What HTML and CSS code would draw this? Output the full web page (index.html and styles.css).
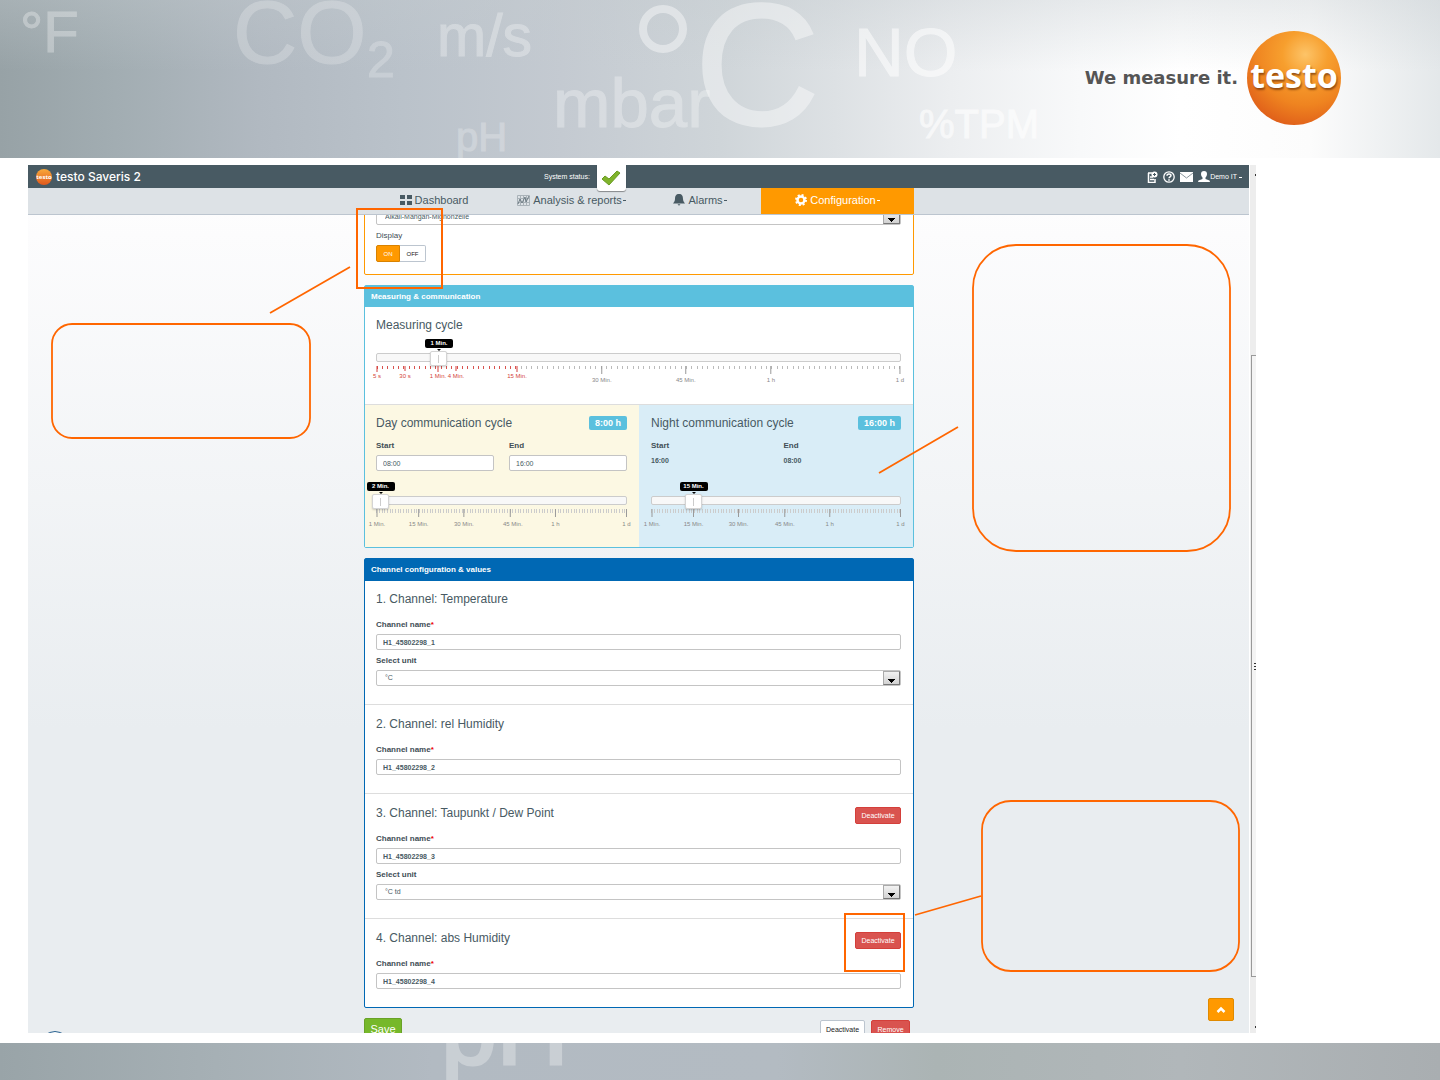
FILE: index.html
```html
<!DOCTYPE html>
<html lang="en">
<head>
<meta charset="utf-8">
<title>testo Saveris 2 - Configuration</title>
<link rel="stylesheet" href="styles.css">
</head>
<body>
<header class="banner">
  <svg class="units" aria-hidden="true">
    <g opacity=".3"><text x="20" y="52" font-size="58">°F</text></g>
    <g opacity=".22"><text x="233" y="63" font-size="89">CO</text><text x="367" y="77" font-size="50">2</text></g>
    <g opacity=".3"><text x="437" y="56" font-size="59">m/s</text><text x="553" y="127" font-size="69">mbar</text></g>
    <g opacity=".24"><text x="456" y="151" font-size="40">pH</text></g>
    <g opacity=".42"><circle cx="663" cy="29" r="20" fill="none" stroke-width="8"/><text class="large" x="695" y="124" font-size="172">C</text></g>
    <g opacity=".55"><text x="854" y="76" font-size="69">NO</text></g>
    <g opacity=".6"><text x="919" y="138" font-size="40">%TPM</text></g>
  </svg>
  <p class="claim">We measure it.</p>
  <div class="brand">testo</div>
</header>

<main class="stage">
  <div class="app">
    <div class="view">
      <div class="topbar">
        <div class="product"><span class="ball">testo</span>testo Saveris 2</div>
        <div class="status"><span>System status:</span>
          <span class="status-box"><svg width="20" height="18" viewBox="0 0 20 18"><path d="M1 10l3-3 4 3 8-8 3 2L8 16z" fill="#7fb32b" stroke="#6a9c22"/></svg></span>
        </div>
        <div class="tools">
          <svg width="11" height="12" viewBox="0 0 11 12"><path d="M1 2h4M1.500 2v9.500h6.500V8M3 6h3M3 8.500h4" fill="none" stroke="#fff" stroke-width="1.500"/><circle cx="7.500" cy="3.500" r="3" fill="#fff"/><path d="M7.500 2v3M6 3.500h3" stroke="#485a63"/></svg>
          <svg width="12" height="12" viewBox="0 0 12 12"><circle cx="6" cy="6" r="5.200" fill="none" stroke="#fff" stroke-width="1.300"/><path d="M4 4.800C4 2.500 8 2.500 8 4.600 8 6 6 5.900 6 7.300M6 8.200v1.500" fill="none" stroke="#fff" stroke-width="1.500"/></svg>
          <svg width="13" height="10" viewBox="0 0 13 10"><path d="M0 0h13v10H0z" fill="#fff"/><path d="M0 1l6.500 5L13 1" fill="none" stroke="#8b979d"/></svg>
          <a class="user" href="#"><svg width="12" height="11" viewBox="0 0 12 11"><path d="M6 0c2 0 3 1.300 3 3S8 6 7.500 6.500V8l4 1.500L12 11H0l.5-1.500 4-1.500V6.500C4 6 3 4.700 3 3s1-3 3-3z" fill="#fff"/></svg>Demo IT <i class="caret"></i></a>
        </div>
      </div>
      <nav class="nav">
        <div class="nav-items">
          <a href="#"><svg width="12" height="12" viewBox="0 0 12 12"><path d="M0 1h5v4H0zM7 1h5v4H7zM0 7h5v4H0zM7 7h5v4H7z" fill="#485a63"/></svg>Dashboard</a>
          <a href="#"><svg width="13" height="11" viewBox="0 0 13 11"><path d="M.5 .5h12v10H.5zM3.500 0v11M6.500 0v11M9.500 0v11M0 3.500h13M0 7.500h13" fill="none" stroke="#a9b2b8"/><path d="M1 9l2-5 2 4 3-6 1 5 3-6" fill="none" stroke="#6d7b83"/></svg>Analysis &amp; reports<i class="caret"></i></a>
          <a href="#"><svg width="12" height="12" viewBox="0 0 12 12"><path d="M6 0c3 0 4 2 4 5 0 2 1 3 2 4.500H0C1 8 2 7 2 5c0-3 1-5 4-5zM4.500 10.200h3L6 11.800z" fill="#485a63"/></svg>Alarms<i class="caret"></i></a>
          <a href="#" class="active"><svg width="12" height="12" viewBox="0 0 12 12"><circle cx="6" cy="6" r="3.500" fill="none" stroke="#fff" stroke-width="2.500"/><circle cx="6" cy="6" r="5" fill="none" stroke="#fff" stroke-width="2" stroke-dasharray="2 1.927"/></svg>Configuration<i class="caret"></i></a>
        </div>
      </nav>

      <form class="content">
        <section class="panel orange">
          <div class="select"><select aria-label="Battery type"><option>Alkali-Mangan-Mignonzelle</option></select></div>
          <span class="label light">Display</span>
          <div class="toggle"><button type="button" class="on">ON</button><button type="button">OFF</button></div>
        </section>

        <section class="panel cyan">
          <h2>Measuring &amp; communication</h2>
          <div class="block first measuring">
            <h3>Measuring cycle</h3>
            <div class="slider">
              <output style="left:12%">1 Min.</output>
              <div class="track"><input type="range" aria-label="Measuring cycle" min="0" max="1000" value="118"></div>
              <svg class="scale">
                <g class="red"><path d="M1 0v6M29 0v5M62 0v6M80 0v5M141 0v6"/><text x="1" y="12">5 s</text><text x="29" y="12">30 s</text><text x="62" y="12">1 Min.</text><text x="80" y="12">4 Min.</text><text x="141" y="12">15 Min.</text></g>
                <line x1="43%" x2="43%" y2="8"/><line x1="59%" x2="59%" y2="8"/><line x1="75.200%" x2="75.200%" y2="8"/><line x1="99.800%" x2="99.800%" y2="8"/>
                <text x="43%" y="16">30 Min.</text><text x="59%" y="16">45 Min.</text><text x="75.200%" y="16">1 h</text><text x="99.800%" y="16">1 d</text>
              </svg>
            </div>
          </div>
          <div class="cycles">
            <div class="block day">
              <div class="title"><h3>Day communication cycle</h3><span class="badge">8:00 h</span></div>
              <div class="times">
                <label><span class="label">Start</span><input type="text" value="08:00"></label>
                <label><span class="label">End</span><input type="text" value="16:00"></label>
              </div>
              <div class="slider">
                <output style="left:1.8%">2 Min.</output>
                <div class="track"><input type="range" aria-label="Day communication cycle" min="0" max="1000" value="14"></div>
                <svg class="scale">
                  <line x1="1" x2="1" y2="8"/><line x1="17%" x2="17%" y2="8"/><line x1="35%" x2="35%" y2="8"/><line x1="53.500%" x2="53.500%" y2="8"/><line x1="71.500%" x2="71.500%" y2="8"/><line x1="99.800%" x2="99.800%" y2="8"/>
                  <text x="1" y="17">1 Min.</text><text x="17%" y="17">15 Min.</text><text x="35%" y="17">30 Min.</text><text x="54.500%" y="17">45 Min.</text><text x="71.500%" y="17">1 h</text><text x="99.800%" y="17">1 d</text>
                </svg>
              </div>
            </div>
            <div class="block night">
              <div class="title"><h3>Night communication cycle</h3><span class="badge">16:00 h</span></div>
              <div class="times">
                <div><span class="label">Start</span><b class="value">16:00</b></div>
                <div><span class="label">End</span><b class="value">08:00</b></div>
              </div>
              <div class="slider">
                <output style="left:17%">15 Min.</output>
                <div class="track"><input type="range" aria-label="Night communication cycle" min="0" max="1000" value="168"></div>
                <svg class="scale">
                  <line x1="1" x2="1" y2="8"/><line x1="17%" x2="17%" y2="8"/><line x1="35%" x2="35%" y2="8"/><line x1="53.500%" x2="53.500%" y2="8"/><line x1="71.500%" x2="71.500%" y2="8"/><line x1="99.800%" x2="99.800%" y2="8"/>
                  <text x="1" y="17">1 Min.</text><text x="17%" y="17">15 Min.</text><text x="35%" y="17">30 Min.</text><text x="53.500%" y="17">45 Min.</text><text x="71.500%" y="17">1 h</text><text x="99.800%" y="17">1 d</text>
                </svg>
              </div>
            </div>
          </div>
        </section>

        <section class="panel blue">
          <h2>Channel configuration &amp; values</h2>
          <div class="block first">
            <div class="title"><h3>1. Channel: Temperature</h3></div>
            <label class="label" for="ch1">Channel name<em>*</em></label><input class="name" id="ch1" type="text" value="H1_45802298_1">
            <label class="label" for="unit1">Select unit</label><div class="select"><select id="unit1"><option>°C</option></select></div>
          </div>
          <div class="block">
            <div class="title"><h3>2. Channel: rel Humidity</h3></div>
            <label class="label" for="ch2">Channel name<em>*</em></label><input class="name" id="ch2" type="text" value="H1_45802298_2">
          </div>
          <div class="block">
            <div class="title"><h3>3. Channel: Taupunkt / Dew Point</h3><button type="button" class="btn danger">Deactivate</button></div>
            <label class="label" for="ch3">Channel name<em>*</em></label><input class="name" id="ch3" type="text" value="H1_45802298_3">
            <label class="label" for="unit3">Select unit</label><div class="select"><select id="unit3"><option>°C td</option></select></div>
          </div>
          <div class="block">
            <div class="title"><h3>4. Channel: abs Humidity</h3><button type="button" class="btn danger">Deactivate</button></div>
            <label class="label" for="ch4">Channel name<em>*</em></label><input class="name" id="ch4" type="text" value="H1_45802298_4">
          </div>
        </section>

        <div class="actions">
          <button type="button" class="btn save">Save</button>
          <button type="button" class="btn plain">Deactivate</button>
          <button type="button" class="btn danger">Remove</button>
        </div>
      </form>

      <span class="help-ring"></span>
      <button type="button" class="to-top" aria-label="Back to top"><svg width="10" height="8" viewBox="0 0 10 8"><path d="M1.500 6L5 2.500 8.500 6" fill="none" stroke="#fff" stroke-width="2.500"/></svg></button>

      <div class="notes">
        <svg width="1221" height="868" viewBox="28 165 1221 868" fill="none" stroke="#ff6600" stroke-width="2">
          <rect x="357" y="209" width="85" height="79"/>
          <rect x="845" y="914" width="59" height="57"/>
          <g stroke-width="1.800">
            <path d="M350 267l-80 46M958 427l-79 46M981 896l-66 19"/>
            <rect x="52" y="324" width="258" height="114" rx="20"/>
            <rect x="973" y="245" width="257" height="306" rx="43"/>
            <rect x="982" y="801" width="257" height="170" rx="29"/>
          </g>
        </svg>
      </div>
    </div>
    <div class="scrollbar"><i class="dot"></i><div class="thumb"><i></i><i></i><i></i></div><i class="dot"></i></div>
  </div>
</main>

<footer class="footer">
  <svg class="units" aria-hidden="true"><g opacity=".3"><text class="large" x="441" y="21" font-size="100">pH</text></g></svg>
</footer>
</body>
</html>
```

FILE: styles.css
```css
*, *::after { box-sizing: border-box; }

body {
  margin: 0;
  height: 100vh;
  display: flex;
  flex-direction: column;
  overflow: hidden;
  background: #fff;
  color: #485a63;
  font: 8px/12px "Liberation Sans", Arial, sans-serif;
}

h2, h3, p { margin: 0; }
button, input, select { font: inherit; color: inherit; margin: 0; }
a { color: inherit; text-decoration: none; }
svg { flex: none; }

/* Slide banner */
.banner {
  position: relative;
  flex: none;
  height: 158px;
  display: flex;
  align-items: center;
  justify-content: flex-end;
  gap: 9px;
  padding: 0 99px 2px 0;
  background:
    linear-gradient(180deg, rgba(196, 203, 207, .35), rgba(255, 255, 255, 0) 45%),
    linear-gradient(90deg, #97a2a6 0, #a2adb2 8%, #b1b9c1 18%, #bac2ca 28%, #c4cad1 39%, #cfd5d9 50%, #dde1e4 58%, #eceef0 66%, #f8f9fa 75%, #fff 82%, #fcfcfc 91%, #e4e8ea 100%);
}
.units {
  position: absolute;
  inset: 0;
  width: 100%;
  height: 100%;
  fill: #fff;
  stroke: #fff;
  stroke-width: 1;
}
.units .large { stroke-width: 3; }
.claim {
  position: relative;
  color: #555;
  font: 700 18px/24px "DejaVu Sans", sans-serif;
}
.brand {
  position: relative;
  display: flex;
  align-items: center;
  justify-content: center;
  width: 94px;
  height: 94px;
  padding-bottom: 6px;
  border-radius: 50%;
  background: radial-gradient(circle at 62% 25%, #fdc468 0, #f79f2e 25%, #ef8420 55%, #e0601a 80%, #cc5020 100%);
  color: #fff;
  font: 700 34px/40px "Open Sans", sans-serif;
  text-shadow: 1px 2px 2px rgba(110, 50, 10, .7);
}

/* Application window on the slide */
.stage {
  flex: 1;
  min-height: 0;
  display: flex;
  padding: 7px 184px 10px 28px;
}
.app { flex: 1; min-width: 0; display: flex; overflow: hidden; }
.view {
  position: relative;
  flex: 1;
  min-width: 0;
  overflow: hidden;
  background: linear-gradient(180deg, #fff 0, #fcfcfd 8%, #e9edf0 65%);
}
.topbar {
  position: relative;
  z-index: 2;
  display: grid;
  grid-template-columns: 1fr 550px 1fr;
  align-items: center;
  height: 23px;
  padding: 0 7px 0 8px;
  background: #485a63;
  color: #fff;
}
.product {
  display: flex;
  align-items: center;
  gap: 4px;
  font: 500 12px/16px Inter, sans-serif;
}
.ball {
  display: flex;
  align-items: center;
  justify-content: center;
  width: 16px;
  height: 16px;
  border-radius: 50%;
  background: linear-gradient(180deg, #f9a83a, #e0581c);
  font: 700 6px/8px "Open Sans", sans-serif;
}
.status {
  display: flex;
  gap: 7px;
  height: 23px;
  padding-left: 180px;
  font-size: 7px;
  line-height: 23px;
}
.status-box {
  display: flex;
  align-items: center;
  justify-content: center;
  width: 29px;
  height: 26px;
  border-radius: 0 0 3px 3px;
  background: #fff;
  box-shadow: 0 1px 1px rgba(0, 0, 0, .4);
}
.tools {
  display: flex;
  align-items: center;
  justify-content: flex-end;
  gap: 5px;
  font-size: 7px;
}
.user { display: flex; align-items: center; }
.caret {
  width: 3px;
  margin-top: 1px;
  border-top: 1px solid currentColor;
}
.user .caret { margin-left: 2px; }

.nav {
  position: relative;
  z-index: 1;
  padding-left: 1px;
  background: #dde2e6;
  border-bottom: 1px solid #bcc5cf;
}
.nav-items {
  display: grid;
  grid-template-columns: 140fr 135fr 122fr 153fr;
  max-width: 550px;
  margin: 0 auto;
}
.nav-items a {
  display: flex;
  align-items: center;
  justify-content: center;
  gap: 3px;
  height: 26px;
  padding-bottom: 2px;
  font-size: 11px;
  line-height: 16px;
}
.nav-items .caret { margin-left: -2px; }
.nav-items .active { background: #ff9900; color: #fff; }

/* Panels */
.content {
  width: 551px;
  max-width: 100%;
  margin: -20px auto 0;
  padding-left: 1px;
}
.panel {
  margin-bottom: 10px;
  border: 1px solid;
  border-radius: 2px;
  background: #fff;
}
.orange { border-color: #f90; padding: 13px 12px 12px 11px; }
.cyan { border-color: #5bc0de; }
.blue { border-color: #0068b4; }
h2 {
  padding: 0 6px;
  color: #fff;
  font-size: 8px;
  line-height: 21px;
}
.cyan h2 { background: #5bc0de; }
.blue h2 { padding-bottom: 1px; background: #0068b4; }
h3 { font-size: 12px; font-weight: 400; line-height: 16px; }

.block { padding: 11px 12px 18px 11px; border-top: 1px solid #ddd; }
.block.first { padding-top: 10px; border-top: 0; }
.title {
  display: flex;
  align-items: flex-start;
  justify-content: space-between;
  height: 16px;
  margin-bottom: 12px;
}
.label { display: block; margin: 5px 0 3px; font-weight: 700; color: #414e56; }
.label.light { font-weight: 400; }
.label em { color: #e00; font-style: normal; }
.title + .label { margin-top: 0; }

input[type="text"], .select {
  display: block;
  width: 100%;
  height: 16px;
  padding: 0 6px;
  border: 1px solid #c4c4c4;
  border-radius: 2px;
  background: #fff;
  font-size: 7px;
  line-height: 14px;
}
input.name { font-weight: 700; }
.select { display: flex; padding: 0 0 0 8px; }
.select select {
  flex: 1;
  appearance: none;
  padding: 0;
  border: 0;
  background: none;
}
.select::after {
  content: "";
  width: 17px;
  border: 1px solid #777;
  border-top-color: #aaa;
  border-left-color: #aaa;
  background:
    linear-gradient(#000, #000) center 7px / 7px 1px no-repeat,
    linear-gradient(#000, #000) center 8px / 5px 1px no-repeat,
    linear-gradient(#000, #000) center 9px / 3px 1px no-repeat,
    linear-gradient(#000, #000) center 10px / 1px 1px no-repeat,
    linear-gradient(#f2f2f2, #d2d2d2);
}

.toggle { display: flex; }
.toggle button {
  width: 26px;
  height: 17px;
  padding: 0;
  border: 1px solid #bcc5cf;
  border-left: 0;
  border-radius: 0 2px 2px 0;
  background: #fff;
  font-size: 6px;
  color: #222;
}
.toggle .on {
  width: 24px;
  border: 1px solid #d98200;
  border-radius: 2px 0 0 2px;
  background: #f90;
  color: #fff;
}

/* Communication cycles */
.cycles { display: grid; grid-template-columns: 1fr 1fr; }
.cycles .title { margin-bottom: 9px; }
.cycles .block { padding-top: 10px; padding-bottom: 0; }
.day { background: #fcf8e3; }
.night { background: #d9edf7; }
.cycles .night { padding-left: 12px; }
.badge {
  height: 14px;
  margin-top: 1px;
  padding: 0 6px;
  border-radius: 2px;
  background: #5bc0de;
  color: #fff;
  font-size: 9px;
  font-weight: 700;
  line-height: 14px;
}
.times { display: grid; grid-template-columns: 1fr 1fr; gap: 15px; margin-bottom: 11px; }
.times .label { margin-top: 0; }
.value { display: block; height: 16px; font-size: 7px; line-height: 12px; }

.measuring h3 { margin-bottom: 6px; }
.block.measuring { padding-bottom: 0; }
.slider { position: relative; padding-top: 14px; }
.slider output {
  position: absolute;
  top: 0;
  width: 28px;
  margin-left: -14px;
  border-radius: 2px;
  background: #000;
  color: #fff;
  font-size: 6px;
  font-weight: 700;
  line-height: 9px;
  text-align: center;
}
.slider output::after {
  content: "";
  position: absolute;
  top: 10px;
  left: 12px;
  border: 2px solid transparent;
  border-top-color: #000;
  border-bottom: 0;
}
.track {
  height: 9px;
  border: 1px solid #ccc;
  border-radius: 2px;
  background: #f8f8f8;
}
.track input {
  display: block;
  appearance: none;
  width: calc(100% + 18px);
  height: 15px;
  margin: -3px -9px 0;
  background: none;
}
.track input::-webkit-slider-thumb {
  appearance: none;
  width: 17px;
  height: 15px;
  border: 1px solid #d4d4d4;
  border-radius: 2px;
  background: linear-gradient(#ccc, #ccc) center / 1px 8px no-repeat, #fff;
  box-shadow: 0 1px 2px rgba(0, 0, 0, .2);
}
.scale {
  display: block;
  width: 100%;
  height: 38px;
  margin-top: 4px;
  overflow: visible;
  background: repeating-linear-gradient(90deg, #ccc 0 1px, transparent 1px 3px, #ccc 3px 4px, transparent 4px 6px, #ccc 6px 7px, transparent 7px 8px) 0 0 / 100% 4px no-repeat;
}
.measuring .scale {
  background:
    repeating-linear-gradient(90deg, #d9534f 0 1px, transparent 1px 5px, #d9534f 5px 6px, transparent 6px 10px, #d9534f 10px 11px, transparent 11px 16px) 1px 0 / 140px 3px no-repeat,
    repeating-linear-gradient(90deg, #bbb 0 1px, transparent 1px 5px, #bbb 5px 6px, transparent 6px 10px, #bbb 10px 11px, transparent 11px 16px) 145px 0 / 100% 3px no-repeat;
}
.scale line { stroke: #999; }
.scale text { fill: #888; font-size: 6px; text-anchor: middle; }
.scale .red path { stroke: #d43f3a; }
.scale .red text { fill: #d43f3a; }

/* Buttons */
.btn {
  height: 17px;
  padding: 0 5px;
  border: 1px solid #d43f3a;
  border-radius: 2px;
  background: #d9534f;
  color: #fff;
  font-size: 7px;
  line-height: 15px;
}
.title .btn { width: 46px; margin-top: 2px; }
.actions { display: flex; gap: 6px; padding-right: 4px; }
.actions .btn { height: 19px; margin-top: 2px; }
.actions .plain { width: 45px; border-color: #bcc5cf; background: #fff; color: #222; }
.actions .danger { width: 39px; }
.actions .save {
  width: 38px;
  height: 23px;
  margin: 0 auto 0 0;
  border-color: #69a227;
  background: #76b82a;
  font-size: 11px;
}

.to-top {
  position: absolute;
  right: 15px;
  bottom: 12px;
  display: flex;
  align-items: center;
  justify-content: center;
  width: 26px;
  height: 23px;
  padding: 0;
  border: 1px solid #e08a00;
  border-radius: 2px;
  background: #f90;
}
.help-ring {
  position: absolute;
  left: 12px;
  bottom: -28px;
  width: 30px;
  height: 30px;
  border: 1px solid #27608f;
  border-radius: 50%;
  background: #fff;
}
.notes {
  position: absolute;
  inset: 0;
  z-index: 3;
  display: flex;
  justify-content: center;
  pointer-events: none;
}

.scrollbar {
  flex: none;
  display: flex;
  flex-direction: column;
  align-items: flex-end;
  width: 7px;
  padding: 9px 0 5px;
  border-left: 1px solid #fff;
  background: #ededed;
}
.dot { width: 1px; height: 2px; background: #333; }
.thumb {
  display: flex;
  flex-direction: column;
  align-items: flex-end;
  justify-content: center;
  gap: 2px;
  width: 5px;
  height: 622px;
  margin: 179px 0 auto;
  border: 1px solid #999;
  border-right: 0;
  background: #f4f4f4;
}
.thumb i { width: 2px; height: 1px; background: #333; }

.footer {
  position: relative;
  flex: none;
  height: 37px;
  overflow: hidden;
  background: linear-gradient(90deg, #99a4a8 0, #a6b0b5 15%, #b2bac2 30%, #b3bbc2 54%, #abb4b4 65%, #b1b7ba 82%, #a9aeb1 100%);
}
```
